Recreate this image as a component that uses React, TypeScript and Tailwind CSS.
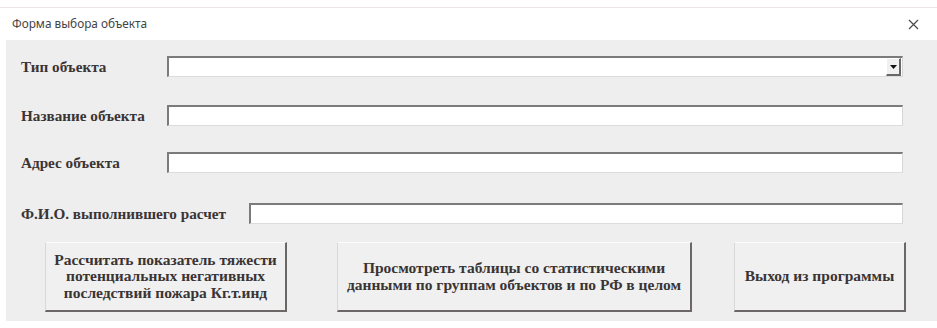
import React from "react";

const serif = { fontFamily: '"Liberation Serif", "Times New Roman", serif' };

function Field({ className = "" }: { className?: string }) {
  return (
    <div
      className={`h-[21px] bg-white border-t-2 border-l-2 border-b border-r border-t-[#7b7b7b] border-l-[#7b7b7b] border-b-[#dcdcdc] border-r-[#d6d6d6] ${className}`}
    />
  );
}

function Row({
  label,
  labelWidth,
  top,
  children,
}: {
  label: string;
  labelWidth: string;
  top: string;
  children: React.ReactNode;
}) {
  return (
    <div className={`flex items-center ${top}`}>
      <div
        className={`${labelWidth} shrink-0 text-[15.2px] font-bold text-[#3a3434] leading-none`}
        style={serif}
      >
        {label}
      </div>
      {children}
    </div>
  );
}

function FormButton({
  width,
  children,
}: {
  width: string;
  children: React.ReactNode;
}) {
  return (
    <button
      type="button"
      className={`${width} h-[70px] shrink-0 flex items-center justify-center text-center bg-[#f0f0f0] border-t border-l border-r-2 border-b-2 border-t-[#fbfbfb] border-l-[#d8d8d8] border-r-[#6b6767] border-b-[#6b6767] text-[15.5px] font-bold leading-[16.5px] text-[#3a3434]`}
      style={serif}
    >
      <span>{children}</span>
    </button>
  );
}

export default function App() {
  return (
    <div className="w-[937px] h-[328px] bg-white overflow-hidden flex flex-col">
      <div className="h-[7px] shrink-0" />
      <div className="h-px shrink-0 bg-[#ece4e2]" />
      {/* Title bar */}
      <div className="h-[32px] shrink-0 flex items-center justify-between pl-[12px] pr-[18px]">
        <span
          className="text-[11.8px] text-[#444]"
          style={{ fontFamily: '"Noto Sans", "Open Sans", sans-serif' }}
        >
          Форма выбора объекта
        </span>
        <svg width="11" height="11" viewBox="0 0 11 11">
          <path d="M1 1 L10 10 M10 1 L1 10" stroke="#4a4a4a" strokeWidth="1.2" />
        </svg>
      </div>
      {/* Form body */}
      <div className="ml-[6px] h-[281px] shrink-0 bg-[#eeeeee] pl-[15px] pr-[34px] pt-[16px]">
        <Row label="Тип объекта" labelWidth="w-[146px]" top="">
          <div className="relative flex-1">
            <Field className="w-full" />
            <div className="absolute right-[2px] top-[2px] w-[15px] h-[18px] bg-[#f0f0f0] border-t border-l border-r-2 border-b-2 border-t-white border-l-white border-r-[#6b6767] border-b-[#6b6767] flex items-center justify-center">
              <svg width="7" height="4" viewBox="0 0 7 4">
                <path d="M0 0 L7 0 L3.5 4 Z" fill="#111" />
              </svg>
            </div>
          </div>
        </Row>
        <Row label="Название объекта" labelWidth="w-[146px]" top="mt-[28px]">
          <Field className="flex-1" />
        </Row>
        <Row label="Адрес объекта" labelWidth="w-[146px]" top="mt-[26px]">
          <Field className="flex-1" />
        </Row>
        <Row label="Ф.И.О. выполнившего расчет" labelWidth="w-[228px]" top="mt-[30px]">
          <Field className="flex-1" />
        </Row>
        <div className="flex mt-[18px] ml-[24px] gap-[50px]">
          <FormButton width="w-[242px]">
            Рассчитать показатель тяжести
            <br />
            потенциальных негативных
            <br />
            последствий пожара Кг.т.инд
          </FormButton>
          <div className="flex gap-[42px]">
            <FormButton width="w-[355px]">
              Просмотреть таблицы со статистическими
              <br />
              данными по группам объектов и по РФ в целом
            </FormButton>
            <FormButton width="w-[172px]">Выход из программы</FormButton>
          </div>
        </div>
      </div>
    </div>
  );
}
